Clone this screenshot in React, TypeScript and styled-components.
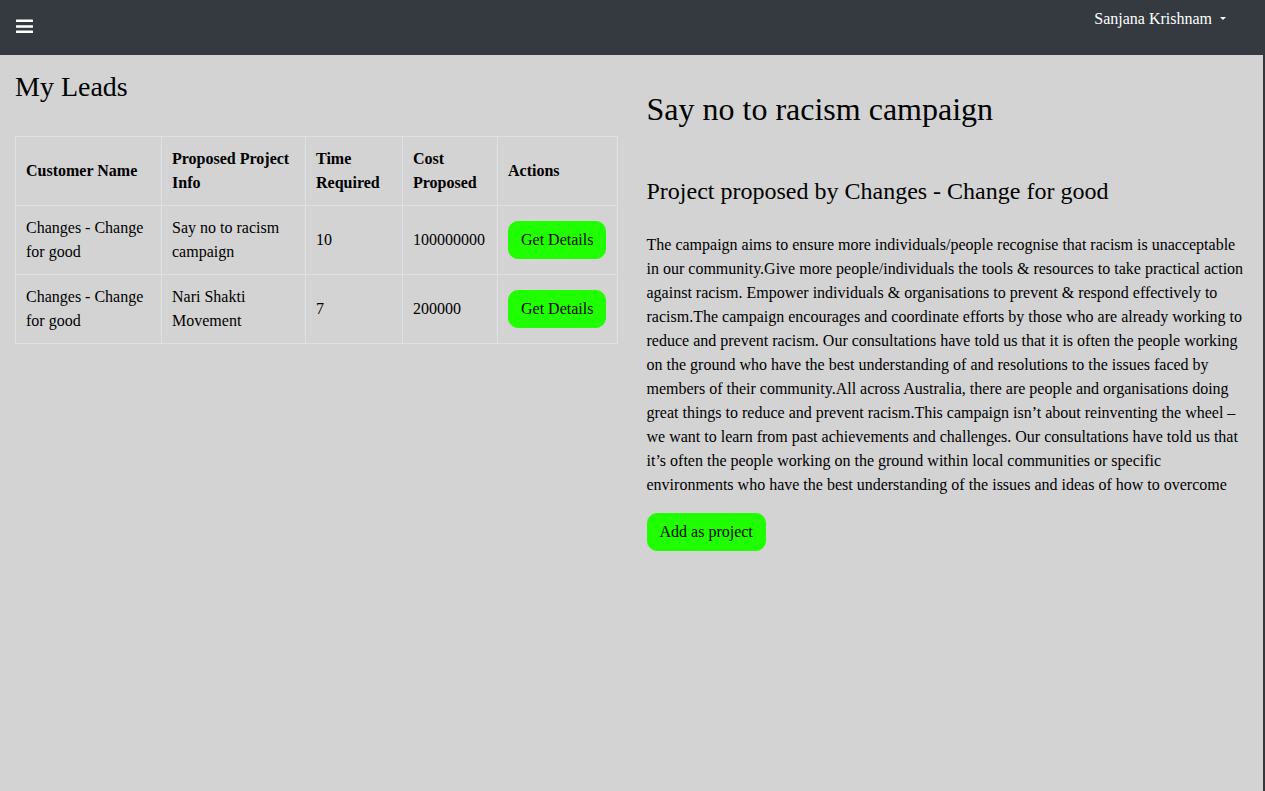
import React from "react";
import styled, { createGlobalStyle } from "styled-components";

const GlobalStyle = createGlobalStyle`
  html, body {
    margin: 0;
    padding: 0;
    background-color: #d3d3d3;
  }
  body {
    font-family: "Liberation Serif", "Times New Roman", serif;
    font-size: 16px;
    line-height: 24px;
    color: #000;
  }
  * {
    box-sizing: border-box;
  }
`;

interface Lead {
  customer: string;
  project: string;
  time: string;
  cost: string;
}

const leads: Lead[] = [
  {
    customer: "Changes - Change for good",
    project: "Say no to racism campaign",
    time: "10",
    cost: "100000000",
  },
  {
    customer: "Changes - Change for good",
    project: "Nari Shakti Movement",
    time: "7",
    cost: "200000",
  },
];

const columnWidths = [146, 144, 97, 95, 120];

const description =
  "The campaign aims to ensure more individuals/people recognise that racism is unacceptable in our community.Give more people/individuals the tools & resources to take practical action against racism. Empower individuals & organisations to prevent & respond effectively to racism.The campaign encourages and coordinate efforts by those who are already working to reduce and prevent racism. Our consultations have told us that it is often the people working on the ground who have the best understanding of and resolutions to the issues faced by members of their community.All across Australia, there are people and organisations doing great things to reduce and prevent racism.This campaign isn\u2019t about reinventing the wheel \u2013 we want to learn from past achievements and challenges. Our consultations have told us that it\u2019s often the people working on the ground within local communities or specific environments who have the best understanding of the issues and ideas of how to overcome";

const Page = styled.div`
  min-height: 100vh;
  display: flex;
  flex-direction: column;
`;

const NavBar = styled.nav`
  display: flex;
  justify-content: space-between;
  align-items: flex-start;
  height: 55px;
  padding: 0 39px 0 16px;
  background-color: #343a40;
`;

const MenuButton = styled.button`
  display: flex;
  margin-top: 19px;
  padding: 0;
  border: 0;
  background: none;
  cursor: pointer;
`;

const UserToggle = styled.div`
  display: flex;
  align-items: center;
  margin-top: 7px;
  color: #fff;
  font-size: 16px;
  line-height: 24px;
  cursor: pointer;
`;

const Caret = styled.span`
  width: 0;
  height: 0;
  margin-left: 8px;
  margin-top: -1px;
  border-top: 3px solid #fff;
  border-left: 3px solid transparent;
  border-right: 3px solid transparent;
`;

const Content = styled.main`
  flex: 1;
  display: flex;
  border-right: 2px solid #34383c;
`;

const Column = styled.section`
  width: 50%;
  padding: 0 15px;
`;

const LeadsTitle = styled.h3`
  margin: 15px 0 32px;
  font-size: 28px;
  line-height: 33.6px;
  font-weight: 400;
`;

const Table = styled.table`
  width: 602px;
  table-layout: fixed;
  border-collapse: collapse;
`;

const HeadCell = styled.th`
  padding: 10px;
  border: 1px solid #dee2e6;
  text-align: left;
  vertical-align: middle;
  font-weight: 700;
`;

const Cell = styled.td`
  padding: 10px;
  border: 1px solid #dee2e6;
  vertical-align: middle;
`;

const GreenButton = styled.button`
  padding: 6px 12px;
  border: 1px solid #20ff00;
  border-radius: 10px;
  background-color: #20ff00;
  color: #000;
  font-family: inherit;
  font-size: 16px;
  line-height: 24px;
  cursor: pointer;
`;

const ProjectTitle = styled.h2`
  margin: 35px 0 49px;
  font-size: 32px;
  line-height: 38.4px;
  font-weight: 400;
`;

const ProposedBy = styled.h4`
  margin: 0 0 27px;
  font-size: 24px;
  line-height: 28.8px;
  font-weight: 400;
`;

const Description = styled.p`
  margin: 0 0 16px;
`;

const MenuIcon = () => (
  <svg width="17" height="14" viewBox="0 0 17 14" fill="#fff">
    <rect x="0" y="0.5" width="17" height="2.6" rx="0.4" />
    <rect x="0" y="6.2" width="17" height="2.6" rx="0.4" />
    <rect x="0" y="11.6" width="17" height="2.6" rx="0.4" />
  </svg>
);

const App: React.FC = () => (
  <>
    <GlobalStyle />
    <Page>
      <NavBar>
        <MenuButton aria-label="menu">
          <MenuIcon />
        </MenuButton>
        <UserToggle>
          Sanjana Krishnam
          <Caret />
        </UserToggle>
      </NavBar>
      <Content>
        <Column>
          <LeadsTitle>My Leads</LeadsTitle>
          <Table>
            <colgroup>
              {columnWidths.map((w, i) => (
                <col key={i} style={{ width: w }} />
              ))}
            </colgroup>
            <thead>
              <tr>
                <HeadCell>Customer Name</HeadCell>
                <HeadCell>Proposed Project Info</HeadCell>
                <HeadCell>Time Required</HeadCell>
                <HeadCell>Cost Proposed</HeadCell>
                <HeadCell>Actions</HeadCell>
              </tr>
            </thead>
            <tbody>
              {leads.map((lead, i) => (
                <tr key={i}>
                  <Cell>{lead.customer}</Cell>
                  <Cell>{lead.project}</Cell>
                  <Cell>{lead.time}</Cell>
                  <Cell>{lead.cost}</Cell>
                  <Cell>
                    <GreenButton>Get Details</GreenButton>
                  </Cell>
                </tr>
              ))}
            </tbody>
          </Table>
        </Column>
        <Column>
          <ProjectTitle>Say no to racism campaign</ProjectTitle>
          <ProposedBy>Project proposed by Changes - Change for good</ProposedBy>
          <Description>{description}</Description>
          <GreenButton>Add as project</GreenButton>
        </Column>
      </Content>
    </Page>
  </>
);

export default App;
